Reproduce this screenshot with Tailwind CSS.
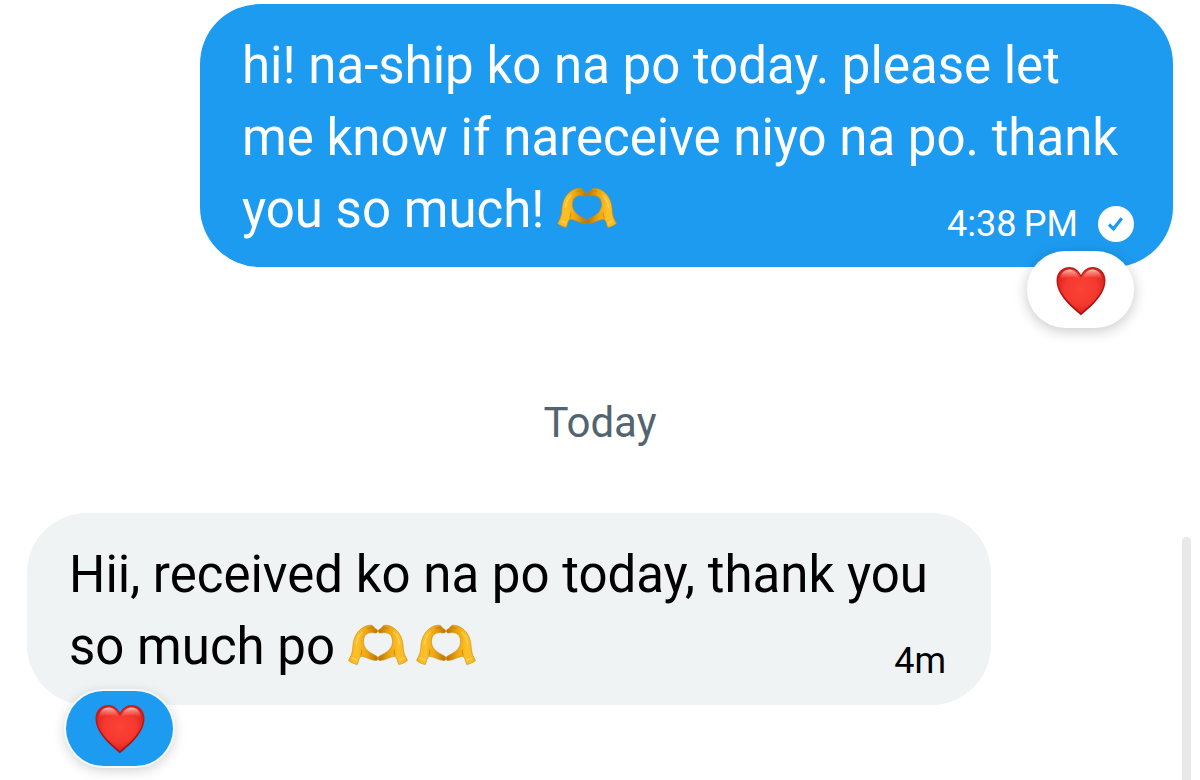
<!DOCTYPE html>
<html lang="fil">
<head>
<meta charset="utf-8">
<meta name="viewport" content="width=device-width, initial-scale=1">
<title>Messages</title>
<script src="https://cdn.jsdelivr.net/npm/@tailwindcss/browser@4"></script>
</head>
<body class="h-screen overflow-hidden bg-white font-['Roboto','Liberation_Sans',sans-serif] text-black">
<svg class="absolute size-0" aria-hidden="true">
  <defs>
    <linearGradient id="heartRim" x1="0" y1="0" x2="0" y2="1"><stop offset="0" stop-color="#c41f1d"/><stop offset="1" stop-color="#a00c0c"/></linearGradient>
    <radialGradient id="heartFill" cx=".5" cy=".45" r=".6"><stop offset="0" stop-color="#fb4337"/><stop offset=".6" stop-color="#f5382e"/><stop offset="1" stop-color="#cf1a17"/></radialGradient>
    <linearGradient id="heartGloss" x1="0" y1="0" x2="0" y2="1"><stop offset="0" stop-color="#ffc9c2" stop-opacity=".95"/><stop offset="1" stop-color="#ff6a5c" stop-opacity="0"/></linearGradient>
    <linearGradient id="skin" x1="0" y1="0" x2="1" y2="0"><stop offset="0" stop-color="#f7b61a"/><stop offset=".3" stop-color="#fdc128"/><stop offset=".65" stop-color="#eaa310"/><stop offset="1" stop-color="#b87008"/></linearGradient>
    <symbol id="heart" viewBox="0 0 50 50">
      <path fill="url(#heartRim)" d="M25 49.500C23 46.500 .500 32 .500 14.500 .500 6.500 6 1 13.500 1c5 0 9 3 11.500 8C27.500 4 31.500 1 36.500 1 44 1 49.500 6.500 49.500 14.500 49.500 32 27 46.500 25 49.500Z"/>
      <path fill="url(#heartFill)" d="M25 47.500C22.500 44 2 30.500 2 14.500 2 7.500 7.300 2.500 13.500 2.500c5.500 0 9.500 4 11.500 9.500C27 6.500 31 2.500 36.500 2.500c6.200 0 11.500 5 11.500 12C48 30.500 27.500 44 25 47.500Z"/>
      <path fill="url(#heartGloss)" d="M4 14C4 7.500 8.500 3.500 13.500 3.500S21.500 7 23 13c-5-3-13-3-19 1ZM46 14C46 7.500 41.500 3.500 36.500 3.500S28.500 7 27 13c5-3 13-3 19 1Z"/>
    </symbol>
    <symbol id="hand" viewBox="0 0 30 42">
      <path fill="url(#skin)" stroke="#cf850b" stroke-width=".6" stroke-linejoin="round" d="M.500 36.500C2.500 33 4.200 29.500 4.700 25 5 19.500 5.500 14.500 8.500 10 12 4.500 17.500 1.200 22.500 1.200 25 1.400 26 2.700 26.300 4.200 28 4.500 29.700 5.700 29.700 7.200 29.700 8.500 28.300 9.200 26.500 8.900 22 8 18.500 9 16.500 12.500 14.500 17 15.500 22 18.500 25.500 21.500 28.800 25.800 30.300 29.200 32.500 30.500 34 30 36.800 27.500 36.500 22.500 36.200 19 33.200 14 32.300 12.300 32.500 11.500 33.500 11 35.200L9.300 40.500C6 40 3 38.500.500 36.500Z"/>
      <path fill="none" stroke="#c87d08" stroke-width="1.100" stroke-linecap="round" stroke-opacity=".7" d="M26.300 4.200c-2-.8-4.500-.5-6.500.5M13 31c.8-1.700 1-3.200.7-5"/>
      <path fill="none" stroke="#ffe07a" stroke-width="1.600" stroke-linecap="round" stroke-opacity=".5" d="M8.500 20c.3-4 2-8 5.500-11.500M4.500 34l4 2"/>
    </symbol>
    <symbol id="hands" viewBox="0 0 60 42">
      <use href="#hand" width="30" height="42"/>
      <use href="#hand" width="30" height="42" transform="matrix(-1 0 0 1 60 0)"/>
    </symbol>
  </defs>
</svg>
<main class="relative h-full overflow-hidden px-[27px] pt-1">
  <article class="relative ml-[173px] grid rounded-[60px] bg-[#1d9bf0] pt-[26px] pr-[39px] pb-[21px] pl-[42px] text-white">
    <p class="col-start-1 row-start-1 text-[51px] leading-[72px] whitespace-nowrap">hi! na-ship ko na po today. please let<br>me know if nareceive niyo na po. thank<br>you so much! <svg class="mr-2 inline-block h-[42px] w-[60px] align-[-2px]" role="img" aria-label="heart hands"><use href="#hands"/></svg></p>
    <div class="col-start-1 row-start-1 flex items-center gap-5 self-end justify-self-end">
      <time class="text-[36px] leading-[44px]">4:38&#8201;PM</time>
      <svg class="size-9" viewBox="0 0 36 36" role="img" aria-label="Sent"><circle cx="18" cy="18" r="18" fill="#fff"/><path d="M11 18.500l4.500 4.300 8.300-10.600" fill="none" stroke="#1d9bf0" stroke-width="3.200"/></svg>
    </div>
    <button class="absolute right-[39px] -bottom-[61px] flex h-[77px] w-[107px] items-center justify-center rounded-[38px] bg-white pt-[2px] shadow-[0_3px_14px_rgba(0,0,0,0.22)]" aria-label="Heart reaction"><svg class="size-[50px]"><use href="#heart"/></svg></button>
  </article>
  <h2 class="mt-[131px] text-center text-[42px] leading-[50px] font-normal text-[#536471]">Today</h2>
  <article class="relative mt-[65px] mr-[182px] grid rounded-[60px] bg-[#eff3f4] pt-[26px] pr-[45px] pb-[22px] pl-[42px]">
    <p class="col-start-1 row-start-1 text-[51px] leading-[72px] whitespace-nowrap">Hii, received ko na po today, thank you<br>so much po <svg class="mr-2 inline-block h-[42px] w-[60px] align-[-2px]" role="img" aria-label="heart hands"><use href="#hands"/></svg><svg class="mr-2 inline-block h-[42px] w-[60px] align-[-2px]" role="img" aria-label="heart hands"><use href="#hands"/></svg></p>
    <time class="col-start-1 row-start-1 self-end justify-self-end text-[36px] leading-[44px]">4m</time>
    <button class="absolute -bottom-[61px] left-[39px] flex h-[75px] w-[107px] items-center justify-center rounded-[38px] bg-[#1d9bf0] shadow-[0_0_0_2px_#f7f9f9,0_3px_14px_rgba(0,0,0,0.22)]" aria-label="Heart reaction"><svg class="size-[50px]"><use href="#heart"/></svg></button>
  </article>
  <div class="absolute top-[537px] right-[9px] bottom-0 w-[9px] rounded-t-full bg-[#e8e8e8]"></div>
</main>
</body>
</html>
